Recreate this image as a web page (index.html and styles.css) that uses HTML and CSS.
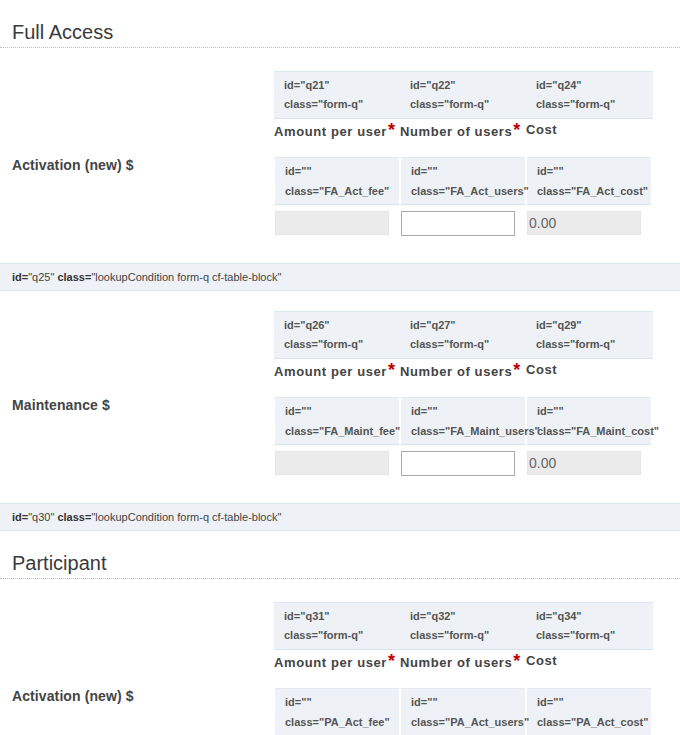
FILE: index.html
```html
<!DOCTYPE html>
<html lang="en">
<head>
<meta charset="utf-8">
<title>Form</title>
<link rel="stylesheet" href="styles.css">
</head>
<body>
<div class="page">
  <h2 class="block-title">Full Access</h2>

  <div class="qrow">
    <div class="qrow-label">Activation (new) $</div>
    <div class="qrow-body">
      <div class="meta-strip">
        <div class="meta"><div>id="q21"</div><div>class="form-q"</div></div>
        <div class="meta"><div>id="q22"</div><div>class="form-q"</div></div>
        <div class="meta"><div>id="q24"</div><div>class="form-q"</div></div>
      </div>
      <div class="q-labels">
        <div class="q-label">Amount per user<span class="req">*</span></div>
        <div class="q-label">Number of users<span class="req">*</span></div>
        <div class="q-label">Cost</div>
      </div>
      <div class="field-meta">
        <div class="cell"><div class="cell-text"><div>id=""</div><div>class="FA_Act_fee"</div></div></div>
        <div class="cell"><div class="cell-text"><div>id=""</div><div>class="FA_Act_users"</div></div></div>
        <div class="cell"><div class="cell-text"><div>id=""</div><div>class="FA_Act_cost"</div></div></div>
      </div>
      <div class="inputs">
        <input class="fld fld-ro" type="text" disabled>
        <input class="fld fld-edit" type="text">
        <input class="fld fld-ro" type="text" value="0.00" disabled>
      </div>
    </div>
  </div>
  <div class="lookup"><b>id=</b>"q25" <b>class=</b>"lookupCondition form-q cf-table-block"</div>

  <div class="qrow qrow-next">
    <div class="qrow-label">Maintenance $</div>
    <div class="qrow-body">
      <div class="meta-strip">
        <div class="meta"><div>id="q26"</div><div>class="form-q"</div></div>
        <div class="meta"><div>id="q27"</div><div>class="form-q"</div></div>
        <div class="meta"><div>id="q29"</div><div>class="form-q"</div></div>
      </div>
      <div class="q-labels">
        <div class="q-label">Amount per user<span class="req">*</span></div>
        <div class="q-label">Number of users<span class="req">*</span></div>
        <div class="q-label">Cost</div>
      </div>
      <div class="field-meta">
        <div class="cell"><div class="cell-text"><div>id=""</div><div>class="FA_Maint_fee"</div></div></div>
        <div class="cell"><div class="cell-text"><div>id=""</div><div>class="FA_Maint_users"</div></div></div>
        <div class="cell"><div class="cell-text"><div>id=""</div><div>class="FA_Maint_cost"</div></div></div>
      </div>
      <div class="inputs">
        <input class="fld fld-ro" type="text" disabled>
        <input class="fld fld-edit" type="text">
        <input class="fld fld-ro" type="text" value="0.00" disabled>
      </div>
    </div>
  </div>
  <div class="lookup"><b>id=</b>"q30" <b>class=</b>"lookupCondition form-q cf-table-block"</div>

  <h2 class="block-title">Participant</h2>

  <div class="qrow">
    <div class="qrow-label">Activation (new) $</div>
    <div class="qrow-body">
      <div class="meta-strip">
        <div class="meta"><div>id="q31"</div><div>class="form-q"</div></div>
        <div class="meta"><div>id="q32"</div><div>class="form-q"</div></div>
        <div class="meta"><div>id="q34"</div><div>class="form-q"</div></div>
      </div>
      <div class="q-labels">
        <div class="q-label">Amount per user<span class="req">*</span></div>
        <div class="q-label">Number of users<span class="req">*</span></div>
        <div class="q-label">Cost</div>
      </div>
      <div class="field-meta">
        <div class="cell"><div class="cell-text"><div>id=""</div><div>class="PA_Act_fee"</div></div></div>
        <div class="cell"><div class="cell-text"><div>id=""</div><div>class="PA_Act_users"</div></div></div>
        <div class="cell"><div class="cell-text"><div>id=""</div><div>class="PA_Act_cost"</div></div></div>
      </div>
      <div class="inputs">
        <input class="fld fld-ro" type="text" disabled>
        <input class="fld fld-edit" type="text">
        <input class="fld fld-ro" type="text" value="0.00" disabled>
      </div>
    </div>
  </div>
</div>
</body>
</html>
```

FILE: styles.css
```css
html, body {
  margin: 0;
  padding: 0;
  background: #fff;
}

body {
  font-family: "Liberation Sans", Arial, sans-serif;
  color: #444;
  width: 680px;
  overflow: hidden;
}

.page {
  width: 680px;
}

.block-title {
  margin: 20px 0 0;
  padding: 0 12px 3px;
  font-size: 20px;
  line-height: 24px;
  font-weight: normal;
  color: #3a3a3a;
  border-bottom: 1px dotted #bdbdbd;
}

.qrow {
  display: grid;
  grid-template-columns: 274px 379px;
  align-items: center;
  margin-top: 23px;
}

.qrow-next {
  margin-top: 20px;
}

.qrow-label {
  padding-left: 12px;
  font-size: 14px;
  line-height: 18px;
  font-weight: bold;
  color: #444;
  letter-spacing: 0.1px;
}

.qrow-body {
  padding-bottom: 22px;
}

.meta-strip {
  display: grid;
  grid-template-columns: repeat(3, 126px);
  background: #eef2f6;
  border-top: 1px solid #dde6ee;
  border-bottom: 1px solid #d6e2ee;
  padding: 4px 0;
}

.meta {
  padding-left: 10px;
  font-size: 11px;
  line-height: 19px;
  font-weight: bold;
  color: #555;
  white-space: nowrap;
}

.q-labels {
  display: grid;
  grid-template-columns: repeat(3, 126px);
  align-items: start;
  padding-top: 2px;
}

.q-label {
  font-size: 13px;
  line-height: 18px;
  font-weight: bold;
  color: #444;
  letter-spacing: 0.6px;
  white-space: nowrap;
}

.req {
  font-size: 18px;
  line-height: 18px;
  color: #c00000;
  margin-left: 1px;
  letter-spacing: 0;
}

.field-meta {
  display: grid;
  grid-template-columns: repeat(3, 124px);
  column-gap: 2px;
  margin: 16px 0 0 1px;
}

.cell {
  background: #eef2f6;
  border-top: 1px solid #e3eaf1;
  border-bottom: 1px solid #d6e2ee;
  padding: 3px 10px;
  font-size: 11px;
  line-height: 20px;
  font-weight: bold;
  color: #555;
  white-space: nowrap;
}

.cell-text {
  position: relative;
  z-index: 1;
}

.inputs {
  display: grid;
  grid-template-columns: repeat(3, 124px);
  column-gap: 2px;
  align-items: start;
  margin: 6px 0 0 1px;
}

.fld {
  box-sizing: border-box;
  width: 114px;
  margin: 0;
  padding: 0 2px;
  font-family: "Liberation Sans", Arial, sans-serif;
  font-size: 14px;
  color: #666;
  outline: none;
}

.fld-ro {
  height: 24px;
  background: #ebebeb;
  border: 1px solid #e4e4e4;
  padding-left: 1px;
}

.fld-edit {
  height: 25px;
  background: #fff;
  border: 1px solid #a9a9a9;
}

.lookup {
  margin-top: 5px;
  background: #eef2f6;
  border-top: 1px solid #dde6ee;
  border-bottom: 1px solid #d6e2ee;
  padding: 0 12px;
  font-size: 11px;
  line-height: 26px;
  color: #444;
  white-space: nowrap;
}

.lookup b {
  color: #333;
}
```
